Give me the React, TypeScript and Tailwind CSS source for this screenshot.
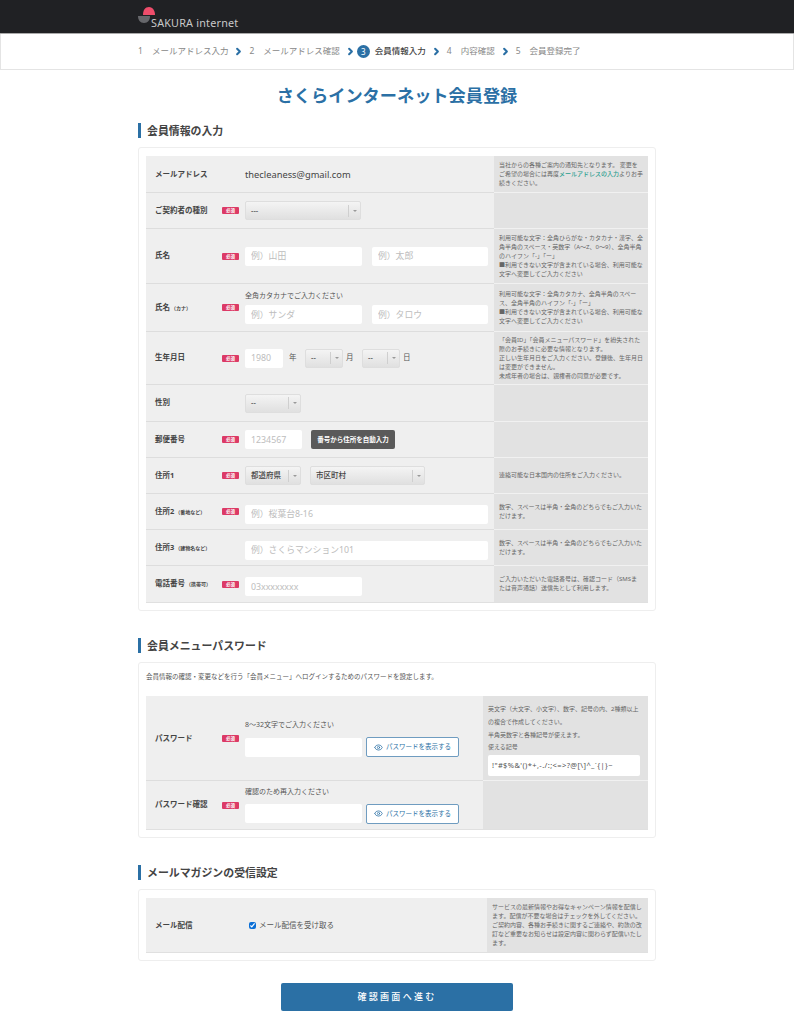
import type { ReactNode } from 'react'
import { ChevronRight, Eye } from 'lucide-react'

const steps = ['メールアドレス入力', 'メールアドレス確認', '会員情報入力', '内容確認', '会員登録完了']

function Badge() {
  return (
    <span className="flex h-[7px] w-[17px] shrink-0 items-center justify-center rounded-[1px] bg-[#dc3a66] text-[4.5px] leading-none font-bold text-white">
      必須
    </span>
  )
}

function Heading({ children }: { children: ReactNode }) {
  return (
    <h2 className="mb-[9px] flex h-[15px] items-center border-l-[3px] border-[#2b70a5] pt-[1px] pl-[6px] text-[10.9px] font-bold text-[#444]">
      {children}
    </h2>
  )
}

function Field({ placeholder, width = 'w-[117px]' }: { placeholder?: string; width?: string }) {
  return (
    <input
      placeholder={placeholder}
      className={`h-[19px] ${width} shrink-0 rounded-[2px] bg-white px-[6px] text-[8.8px] placeholder:text-[#bdbdbd]`}
    />
  )
}

function Select({ label, width }: { label: string; width: string }) {
  return (
    <div className={`flex h-[19px] ${width} shrink-0 items-center rounded-[2px] border border-[#dedede] bg-gradient-to-b from-[#f4f4f4] to-[#e0e0e0] text-[7.5px] font-medium text-[#444]`}>
      <span className="flex-1 pl-[5px]">{label}</span>
      <span className="flex h-[12px] w-[12px] items-center justify-center border-l border-[#cfcfcf]">
        <span className="h-0 w-0 border-x-[2px] border-t-[2.5px] border-x-transparent border-t-[#999]" />
      </span>
    </div>
  )
}

function Rows({ children }: { children: ReactNode }) {
  return <div className="border-b border-[#e0e0e0] [&>div:first-child>div]:border-t-transparent">{children}</div>
}

function Row({
  label,
  sub,
  required,
  help,
  height,
  side = 'w-[154px]',
  children,
}: {
  label: string
  sub?: string
  required?: boolean
  help?: ReactNode
  height: string
  side?: string
  children?: ReactNode
}) {
  return (
    <div className={`flex ${height}`}>
      <div className="flex min-w-0 flex-1 items-center border-t border-[#dddddd] bg-[#efefef]">
        <div className="flex w-[99px] shrink-0 items-center pl-[9px]">
          <span className="flex-1 text-[7.5px] font-bold whitespace-nowrap text-[#444]">
            {label}
            {sub && <span className="ml-[1px] text-[5px]">{sub}</span>}
          </span>
          <span className="w-[23px] shrink-0">{required && <Badge />}</span>
        </div>
        <div className="min-w-0 flex-1">{children}</div>
      </div>
      <div className={`flex ${side} shrink-0 items-center border-t border-[#f1f1f1] bg-[#e2e2e2] pr-[4px] pl-[5px] text-[6px] leading-[9px] text-[#666]`}>
        <div>{help}</div>
      </div>
    </div>
  )
}

function ShowPassword() {
  return (
    <button className="flex h-[20px] w-[93px] items-center justify-center gap-[3px] rounded-[2px] border border-[#6f9cc0] bg-white text-[6.5px] text-[#2b70a5]">
      <Eye size={9} strokeWidth={2} />
      パスワードを表示する
    </button>
  )
}

export default function App() {
  return (
    <div className="min-h-[1024px] bg-white [font-family:'Noto_Sans','Noto_Sans_CJK_JP',sans-serif]">
      <header className="h-[34px] border-b border-[#aaa] bg-[#202124]">
        <div className="mx-auto flex h-full w-[518px] items-end pb-[3px]">
          <svg width="17" height="19" viewBox="0 0 17 19" className="mb-[5px] shrink-0">
            <path d="M5 9 C5 4 7 1 11 1 C15 1 17 5 17 9 Z" fill="#ee4d6b" />
            <path d="M0 10 H12 C12 14 10 17 6 17 C2 17 0 14 0 10 Z" fill="#66676b" />
          </svg>
          <span className="-ml-[4px] text-[10.8px] leading-[14px] tracking-[0.2px] text-[#c9c9c9]">SAKURA internet</span>
        </div>
      </header>

      <nav className="h-[36px] border-x border-b border-[#e4e4e4]">
        <ol className="mx-auto flex h-full w-[518px] -translate-x-px items-center text-[8.5px] text-[#888]">
          {steps.map((step, i) => (
            <li key={step} className="flex items-center">
              {i === 2 ? (
                <>
                  <span className="mr-[5px] -ml-[3px] flex h-[13px] w-[13px] items-center justify-center rounded-full bg-[#2b70a5] text-[8px] text-white">3</span>
                  <span className="font-medium text-[#444]">{step}</span>
                </>
              ) : (
                <>
                  <span className="mr-[9px] ml-[1px]">{i + 1}</span>
                  <span>{step}</span>
                </>
              )}
              {i < 4 && <ChevronRight size={11} strokeWidth={4.5} className="mr-[4px] ml-[5px] text-[#2b70a5]" />}
            </li>
          ))}
        </ol>
      </nav>

      <main className="mx-auto w-[518px]">
        <h1 className="mt-[13px] mb-[14px] h-[26px] text-center text-[17.2px] leading-[26px] font-bold text-[#2b70a5]">
          さくらインターネット会員登録
        </h1>

        <Heading>会員情報の入力</Heading>
        <section className="h-[464px] rounded-[3px] border border-[#eeeeee] px-[7px] pt-[8px]">
          <Rows>
            <Row
              label="メールアドレス"
              height="h-[36px]"
              help={
                <>
                  当社からの各種ご案内の通知先となります。 変更を
                  <br />
                  ご希望の場合には再度
                  <span className="font-medium text-[#2a9d8f]">メールアドレスの入力</span>よりお手
                  <br />
                  続きください。
                </>
              }
            >
              <span className="block text-[9.3px] leading-none text-[#444]">thecleaness@gmail.com</span>
            </Row>
            <Row label="ご契約者の種別" required height="h-[36px]">
              <Select label="---" width="w-[116px]" />
            </Row>
            <Row
              label="氏名"
              required
              height="h-[55px]"
              help={
                <>
                  利用可能な文字：全角ひらがな・カタカナ・漢字、全角半角のスペース・英数字（A～Z、0～9）、全角半角のハイフン「-」「ー」
                  <br />
                  ■利用できない文字が含まれている場合、利用可能な文字へ変更してご入力ください
                </>
              }
            >
              <div className="flex gap-[10px]">
                <Field placeholder="例）山田" />
                <Field placeholder="例）太郎" width="w-[116px]" />
              </div>
            </Row>
            <Row
              label="氏名"
              sub="（カナ）"
              required
              height="h-[48px]"
              help={
                <>
                  利用可能な文字：全角カタカナ、全角半角のスペース、全角半角のハイフン「-」「ー」
                  <br />
                  ■利用できない文字が含まれている場合、利用可能な文字へ変更してご入力ください
                </>
              }
            >
              <p className="mb-[4px] text-[7px] leading-[10px] text-[#555]">全角カタカナでご入力ください</p>
              <div className="flex gap-[10px]">
                <Field placeholder="例）サンダ" />
                <Field placeholder="例）タロウ" width="w-[116px]" />
              </div>
            </Row>
            <Row
              label="生年月日"
              required
              height="h-[53px]"
              help={
                <>
                  「会員ID」「会員メニューパスワード」を紛失された際のお手続きに必要な情報となります。
                  <br />
                  正しい生年月日をご入力ください。登録後、生年月日は変更ができません。
                  <br />
                  未成年者の場合は、親権者の同意が必要です。
                </>
              }
            >
              <div className="flex items-center text-[7.5px] text-[#555]">
                <Field placeholder="1980" width="w-[38px]" />
                <span className="mr-[7px] ml-[6px] w-[9px]">年</span>
                <Select label="--" width="w-[38px]" />
                <span className="ml-[3px] w-[16px]">月</span>
                <Select label="--" width="w-[38px]" />
                <span className="ml-[3px]">日</span>
              </div>
            </Row>
            <Row label="性別" height="h-[37px]">
              <Select label="--" width="w-[56px]" />
            </Row>
            <Row label="郵便番号" required height="h-[36px]">
              <div className="flex gap-[9px]">
                <Field placeholder="1234567" width="w-[57px]" />
                <button className="h-[19px] w-[84px] rounded-[2px] bg-[#5a5a5a] text-[6.5px] font-bold text-white">
                  番号から住所を自動入力
                </button>
              </div>
            </Row>
            <Row label="住所1" required height="h-[36px]" help="連絡可能な日本国内の住所をご入力ください。">
              <div className="flex gap-[9px]">
                <Select label="都道府県" width="w-[56px]" />
                <Select label="市区町村" width="w-[115px]" />
              </div>
            </Row>
            <Row label="住所2" sub="（番地など）" required height="h-[36px]" help="数字、スペースは半角・全角のどちらでもご入力いただけます。">
              <Field placeholder="例）桜葉台8-16" width="w-[243px]" />
            </Row>
            <Row label="住所3" sub="（建物名など）" height="h-[36px]" help="数字、スペースは半角・全角のどちらでもご入力いただけます。">
              <Field placeholder="例）さくらマンション101" width="w-[243px]" />
            </Row>
            <Row
              label="電話番号"
              sub="（携帯可）"
              required
              height="h-[37px]"
              help={
                <>
                  ご入力いただいた電話番号は、確認コード（SMSま
                  <br />
                  たは音声通話）送信先として利用します。
                </>
              }
            >
              <Field placeholder="03xxxxxxxx" />
            </Row>
          </Rows>
        </section>

        <div className="mt-[27px]">
          <Heading>会員メニューパスワード</Heading>
        </div>
        <section className="h-[176px] rounded-[3px] border border-[#eeeeee] px-[7px]">
          <p className="flex h-[33px] items-center pb-[5px] text-[6.5px] text-[#555]">
            会員情報の確認・変更などを行う「会員メニュー」へログインするためのパスワードを設定します。
          </p>
          <Rows>
            <Row
              label="パスワード"
              required
              height="h-[84px]"
              side="w-[165px]"
              help={
                <div className="w-[152px] pt-[2px] leading-[12.7px]">
                  英文字（大文字、小文字）、数字、記号の内、2種類以上の複合で作成してください。
                  <br />
                  半角英数字と各種記号が使えます。
                  <br />
                  使える記号
                  <div className="mt-[1px] flex h-[21px] items-center rounded-[2px] bg-white pl-[4px] text-[7.5px] tracking-[0.4px] whitespace-nowrap text-[#555]">
                    {'!"#$%&\'()*+,-./:;<=>?@[\\]^_`{|}~'}
                  </div>
                </div>
              }
            >
              <p className="mb-[7px] text-[7px] leading-[10px] text-[#555]">8～32文字でご入力ください</p>
              <div className="flex items-center gap-[4px]">
                <Field />
                <ShowPassword />
              </div>
            </Row>
            <Row label="パスワード確認" required height="h-[49px]" side="w-[165px]">
              <p className="mb-[7px] text-[7px] leading-[10px] text-[#555]">確認のため再入力ください</p>
              <div className="flex items-center gap-[4px]">
                <Field />
                <ShowPassword />
              </div>
            </Row>
          </Rows>
        </section>

        <div className="mt-[27px]">
          <Heading>メールマガジンの受信設定</Heading>
        </div>
        <section className="h-[72px] rounded-[3px] border border-[#eeeeee] px-[7px] pt-[8px]">
          <Rows>
            <Row
              label="メール配信"
              height="h-[54px]"
              side="w-[161px]"
              help={
                <>
                  サービスの最新情報やお得なキャンペーン情報を配信します。配信が不要な場合はチェックを外してください。ご契約内容、各種お手続きに関するご連絡や、約款の改訂など重要なお知らせは設定内容に関わらず配信いたします。
                </>
              }
            >
              <label className="ml-[4px] flex items-center gap-[3px] text-[7.5px] text-[#555]">
                <input type="checkbox" defaultChecked className="h-[7px] w-[7px] accent-[#0b6fd6]" />
                メール配信を受け取る
              </label>
            </Row>
          </Rows>
        </section>

        <div className="mt-[22px] flex justify-center">
          <button className="h-[28px] w-[232px] rounded-[2px] bg-[#2b70a5] text-[9px] font-medium tracking-[2.3px] text-white">
            確認画面へ進む
          </button>
        </div>
      </main>
    </div>
  )
}
